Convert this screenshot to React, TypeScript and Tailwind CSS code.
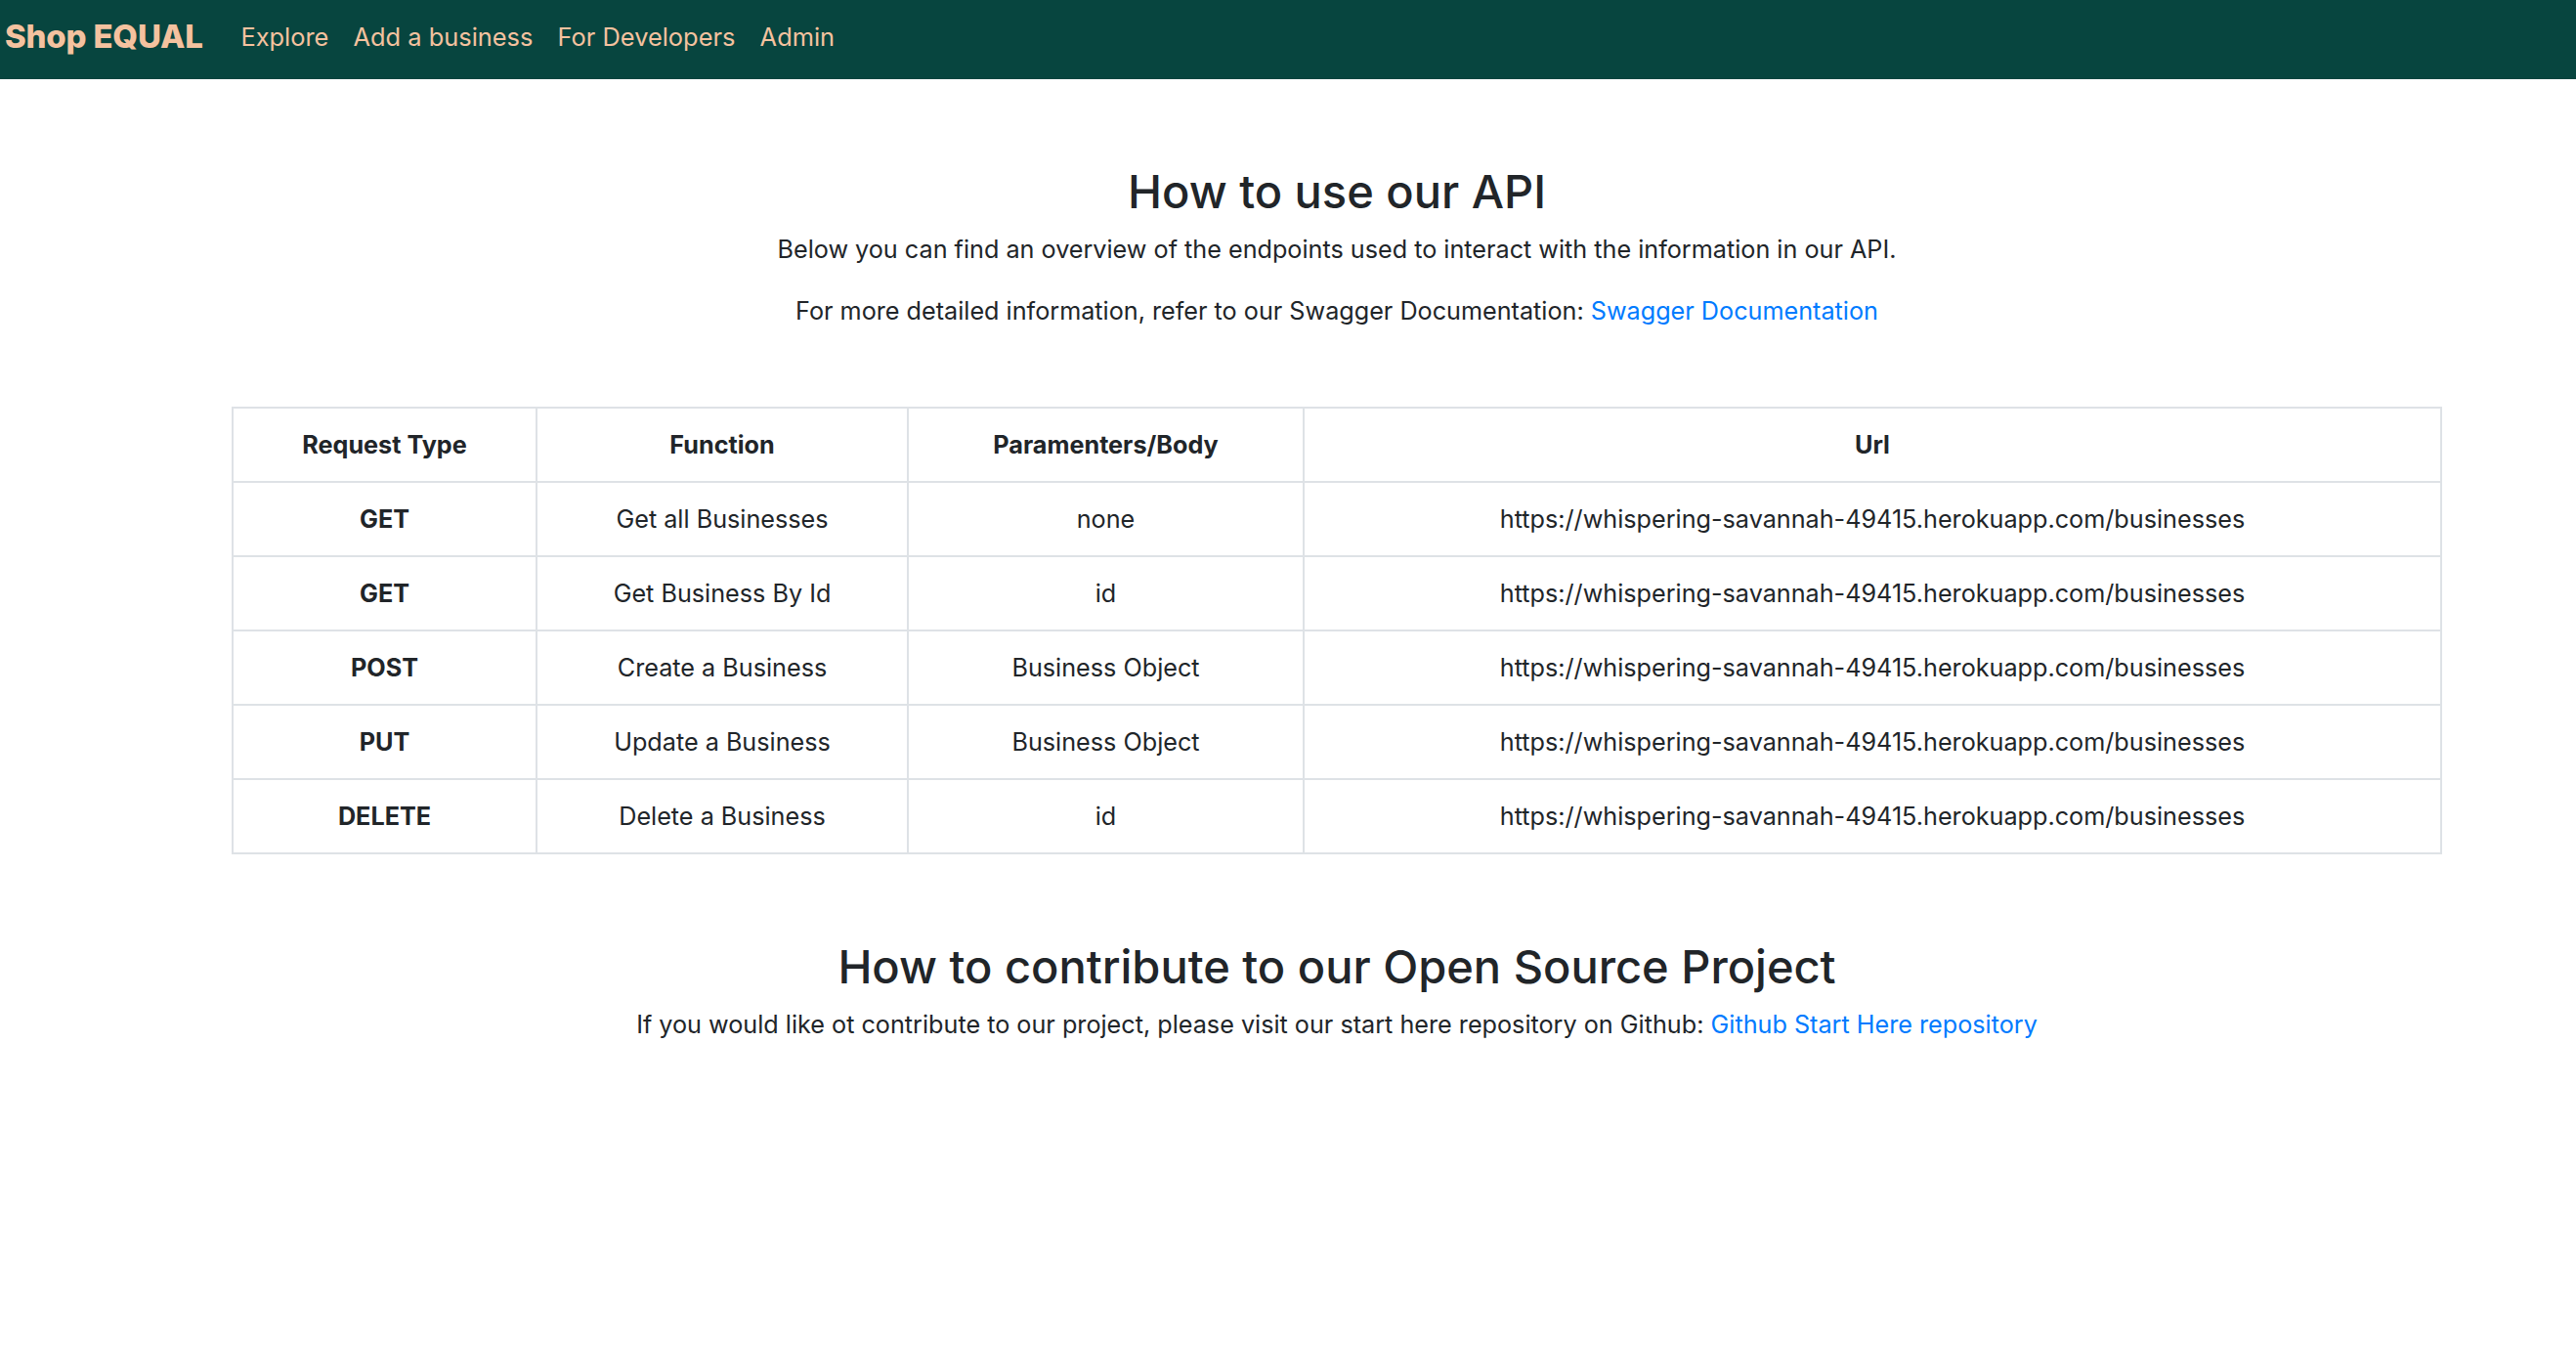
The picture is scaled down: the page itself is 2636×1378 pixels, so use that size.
import React from "react";

const rows = [
  { type: "GET", fn: "Get all Businesses", params: "none" },
  { type: "GET", fn: "Get Business By Id", params: "id" },
  { type: "POST", fn: "Create a Business", params: "Business Object" },
  { type: "PUT", fn: "Update a Business", params: "Business Object" },
  { type: "DELETE", fn: "Delete a Business", params: "id" },
];

const URL = "https://whispering-savannah-49415.herokuapp.com/businesses";

export default function App() {
  return (
    <div
      className="min-h-[1378px] bg-white text-[#212529]"
      style={{ fontFamily: "Inter, 'Noto Sans', 'Liberation Sans', sans-serif" }}
    >
      <nav className="h-[81px] bg-[#07453f] flex items-center pb-[6px] pl-[5px] text-[#f4c29f]">
        <a className="text-[33px] font-extrabold leading-none mr-[26px] tracking-[-0.2px]">Shop EQUAL</a>
        <div className="flex items-center text-[25.4px] leading-none">
          <a className="px-[12.6px]">Explore</a>
          <a className="px-[12.6px]">Add a business</a>
          <a className="px-[12.6px]">For Developers</a>
          <a className="px-[12.6px]">Admin</a>
        </div>
      </nav>

      <main className="pl-[237px] pr-[137px] text-center">
        <h2 className="mt-[85px] mb-[11px] text-[47px] leading-[60px] font-medium">How to use our API</h2>
        <p className="text-[25.2px] leading-[37.2px] mb-[26px]">
          Below you can find an overview of the endpoints used to interact with the information in our API.
        </p>
        <p className="text-[25.2px] leading-[37.2px]">
          For more detailed information, refer to our Swagger Documentation:{" "}
          <a className="text-[#007bff]">Swagger Documentation</a>
        </p>

        <table className="mt-[79px] w-full border-collapse text-[25.2px] leading-[37.2px]">
          <thead>
            <tr>
              <th className="w-[311px] h-[76px] border-2 border-[#dee2e6] font-bold align-middle">Request Type</th>
              <th className="w-[380px] h-[76px] border-2 border-[#dee2e6] font-bold align-middle">Function</th>
              <th className="w-[405px] h-[76px] border-2 border-[#dee2e6] font-bold align-middle">Paramenters/Body</th>
              <th className="h-[76px] border-2 border-[#dee2e6] font-bold align-middle">Url</th>
            </tr>
          </thead>
          <tbody>
            {rows.map((r, i) => (
              <tr key={i}>
                <th className="h-[76px] border-2 border-[#dee2e6] font-bold align-middle">{r.type}</th>
                <td className="h-[76px] border-2 border-[#dee2e6] align-middle">{r.fn}</td>
                <td className="h-[76px] border-2 border-[#dee2e6] align-middle">{r.params}</td>
                <td className="h-[76px] border-2 border-[#dee2e6] align-middle">{URL}</td>
              </tr>
            ))}
          </tbody>
        </table>

        <h2 className="mt-[85px] mb-[11px] text-[47px] leading-[60px] font-medium">
          How to contribute to our Open Source Project
        </h2>
        <p className="text-[25.2px] leading-[37.2px]">
          If you would like ot contribute to our project, please visit our start here repository on Github:{" "}
          <a className="text-[#007bff]">Github Start Here repository</a>
        </p>
      </main>
    </div>
  );
}
